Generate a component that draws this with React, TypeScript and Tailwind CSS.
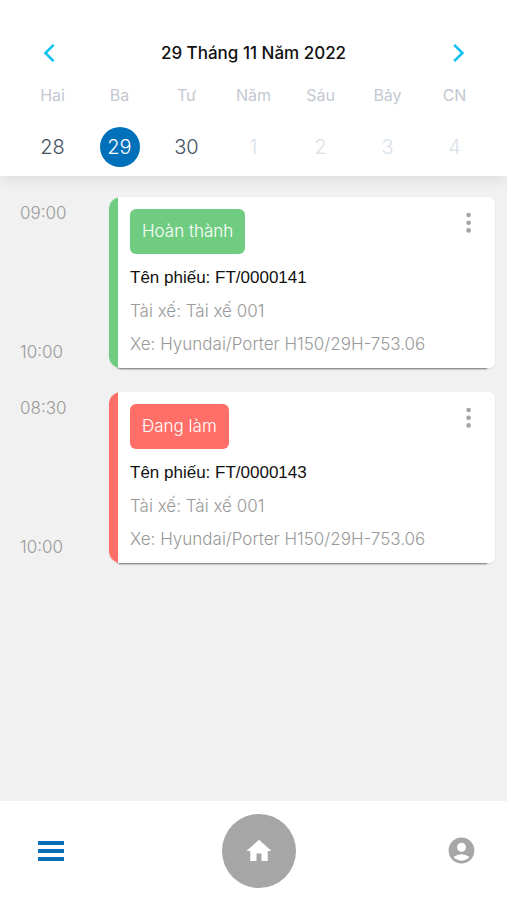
import React, { useState } from 'react';
import { MdAccountCircle, MdHome } from 'react-icons/md';

type Job = {
    id: string;
    start: string;
    end: string;
    status: 'done' | 'doing';
    driver: string;
    vehicle: string;
};

const days = [
    { label: 'Hai', date: 28, inMonth: true },
    { label: 'Ba', date: 29, inMonth: true },
    { label: 'Tư', date: 30, inMonth: true },
    { label: 'Năm', date: 1, inMonth: false },
    { label: 'Sáu', date: 2, inMonth: false },
    { label: 'Bảy', date: 3, inMonth: false },
    { label: 'CN', date: 4, inMonth: false },
];

const jobs: Job[] = [
    { id: 'FT/0000141', start: '09:00', end: '10:00', status: 'done', driver: 'Tài xế 001', vehicle: 'Hyundai/Porter H150/29H-753.06' },
    { id: 'FT/0000143', start: '08:30', end: '10:00', status: 'doing', driver: 'Tài xế 001', vehicle: 'Hyundai/Porter H150/29H-753.06' },
];

const statusStyles = {
    done: { label: 'Hoàn thành', color: 'bg-[#6fcc80]' },
    doing: { label: 'Đang làm', color: 'bg-[#ff6f67]' },
};

const Chevron: React.FC<{ d: string }> = ({ d }) => (
    <svg width="12" height="20" viewBox="0 0 12 20" fill="none" stroke="#12c0f2" strokeWidth="2.6" aria-hidden="true">
        <path d={d} />
    </svg>
);

const WeekHeader: React.FC = () => {
    const [selected, setSelected] = useState(29);

    return (
        <header className="relative bg-white px-[19px] pt-[35px] pb-2 shadow-[0_4px_14px_rgba(0,0,0,0.08)]">
            <div className="flex items-center justify-between px-6">
                <button type="button" aria-label="Tuần trước" className="flex h-9 items-center">
                    <Chevron d="M10.6 1.8 2.4 10l8.2 8.2" />
                </button>
                <h1 className="text-[17px] leading-6 font-medium text-[#111111]">29 Tháng 11 Năm 2022</h1>
                <button type="button" aria-label="Tuần sau" className="flex h-9 items-center">
                    <Chevron d="M2.2 1.8 10.4 10l-8.2 8.2" />
                </button>
            </div>
            <div className="mt-3 grid grid-cols-7">
                {days.map((d) => (
                    <div key={d.label} className="flex flex-col items-center gap-5 pb-px">
                        <span className="text-base leading-6 text-[#c3c9d1]">{d.label}</span>
                        <button
                            type="button"
                            onClick={() => setSelected(d.date)}
                            className={`size-10 rounded-full text-xl font-light ${
                                d.date === selected ? 'bg-[#0070ba] text-white' : d.inMonth ? 'text-[#43515c]' : 'text-[#d9e1e8]'
                            }`}
                        >
                            {d.date}
                        </button>
                    </div>
                ))}
            </div>
        </header>
    );
};

const JobRow: React.FC<{ job: Job }> = ({ job }) => {
    const status = statusStyles[job.status];

    return (
        <li className="flex">
            <div className="flex w-[89px] shrink-0 flex-col justify-between py-1 text-[17px] leading-6 font-light text-[#999999]">
                <time>{job.start}</time>
                <time>{job.end}</time>
            </div>
            <article className="flex min-w-0 flex-1 overflow-hidden rounded-l-xl rounded-r-md bg-white shadow-[0_9px_2px_-8px_rgba(0,0,0,0.5),0_1px_2px_rgba(0,0,0,0.08)]">
                <div className={`w-[9px] shrink-0 ${status.color}`} />
                <div className="min-w-0 flex-1 p-3">
                    <div className="flex items-start justify-between">
                        <span className={`rounded-md px-3 text-[17px] leading-[45px] font-light text-white ${status.color}`}>{status.label}</span>
                        <button type="button" aria-label="Tùy chọn" className="flex w-7 justify-center pt-[3px]">
                            <svg width="6" height="22" viewBox="0 0 6 22" fill="#a3a3a3" aria-hidden="true">
                                <circle cx="2.6" cy="3" r="2.3" />
                                <circle cx="2.6" cy="10.7" r="2.3" />
                                <circle cx="2.6" cy="18.4" r="2.3" />
                            </svg>
                        </button>
                    </div>
                    <div className="mt-3 flex flex-col gap-[9px] text-[17px] leading-6 font-light text-[#999999]">
                        <h2 className="font-['Liberation_Sans',sans-serif] font-normal text-[#111111]">Tên phiếu: {job.id}</h2>
                        <p>Tài xế: {job.driver}</p>
                        <p>Xe: {job.vehicle}</p>
                    </div>
                </div>
            </article>
        </li>
    );
};

const BottomNav: React.FC = () => (
    <nav className="flex h-[99px] items-center justify-between bg-white pr-[30px] pl-[38px]">
        <button type="button" aria-label="Menu" className="w-[34px]">
            <svg width="26" height="20" viewBox="0 0 26 20" fill="#0a6db7" aria-hidden="true">
                <path d="M0 0h26v4H0zM0 8h26v4H0zM0 16h26v4H0z" />
            </svg>
        </button>
        <button type="button" aria-label="Trang chủ" className="flex size-[74px] items-center justify-center rounded-full bg-[#a6a6a6] text-white">
            <MdHome size={30} />
        </button>
        <button type="button" aria-label="Tài khoản" className="text-[#a6a6a6]">
            <MdAccountCircle size={31} />
        </button>
    </nav>
);

export default function App() {
    return (
        <div className="flex min-h-screen flex-col bg-[#f1f1f1] font-[Inter,sans-serif]">
            <WeekHeader />
            <main className="flex-1 pt-[21px] pr-3 pb-6 pl-5">
                <ul className="flex flex-col gap-6">
                    {jobs.map((job) => (
                        <JobRow key={job.id} job={job} />
                    ))}
                </ul>
            </main>
            <BottomNav />
        </div>
    );
}
